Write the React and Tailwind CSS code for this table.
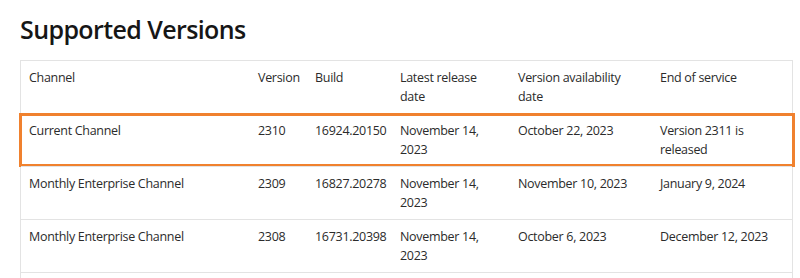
import React from "react";

const cols = "grid grid-cols-[229px_57px_85px_118px_142px_141px]";

const header = ["Channel", "Version", "Build", "Latest release date", "Version availability date", "End of service"];

const rows = [
  ["Current Channel", "2310", "16924.20150", "November 14, 2023", "October 22, 2023", "Version 2311 is released"],
  ["Monthly Enterprise Channel", "2309", "16827.20278", "November 14, 2023", "November 10, 2023", "January 9, 2024"],
  ["Monthly Enterprise Channel", "2308", "16731.20398", "November 14, 2023", "October 6, 2023", "December 12, 2023"],
  ["", "", "", "", "", ""],
];

function Row({ cells, highlight }) {
  return (
    <div className={`relative ${cols} border-t border-[#e3e3e3] first:border-t-0`}>
      {cells.map((c, i) => (
        <div key={i} className="px-2 py-[7px] min-h-[52px] leading-[19px]">
          {c}
        </div>
      ))}
      {highlight && (
        <div className="absolute left-[-2px] right-[-3px] top-[-1px] bottom-[-1px] border-[3px] border-[#f0812e] pointer-events-none" />
      )}
    </div>
  );
}

export default function App() {
  return (
    <div
      className="w-[800px] h-[278px] overflow-hidden bg-white pl-5 pt-[13px]"
      style={{ fontFamily: '"Open Sans", "Noto Sans", sans-serif' }}
    >
      <h2 className="text-[25px] leading-[32px] font-semibold text-[#161616] tracking-[-0.6px]">Supported Versions</h2>
      <div className="mt-[15px] w-[773px] border border-[#e3e3e3] text-[12.5px] tracking-[-0.3px] text-[#2b2b2b]">
        <Row cells={header} />
        {rows.map((r, i) => (
          <Row key={i} cells={r} highlight={i === 0} />
        ))}
      </div>
    </div>
  );
}
